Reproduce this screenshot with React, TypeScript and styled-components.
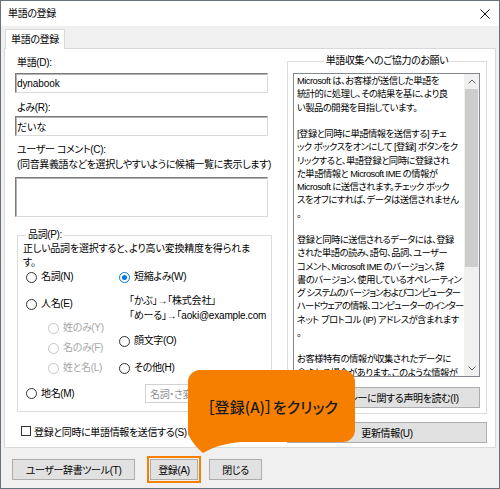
import React from "react";
import styled, { createGlobalStyle } from "styled-components";

const Global = createGlobalStyle`
  html, body { margin: 0; padding: 0; background: #ffffff; }
  body {
    font-family: "Liberation Sans", "Noto Sans CJK JP", sans-serif;
    font-size: 10px;
    color: #000;
    font-feature-settings: "palt";
    letter-spacing: -0.35px;
  }
  * { box-sizing: border-box; }
`;

const Window = styled.div`
  position: relative;
  width: 500px;
  height: 489px;
  border: 1px solid #66717c;
  background: #f0f0f0;
  display: flex;
  flex-direction: column;
  overflow: hidden;
`;

const TitleBar = styled.div`
  height: 25px;
  flex: none;
  background: #fff;
  display: flex;
  align-items: center;
  justify-content: space-between;
  padding: 0 9px 0 7px;
  line-height: 14px;
`;

const TabStrip = styled.div`
  height: 22px;
  flex: none;
  display: flex;
  align-items: flex-end;
  padding-left: 4px;
`;

const Tab = styled.div`
  position: relative;
  z-index: 1;
  height: 20px;
  margin-bottom: -1px;
  padding: 0 5px;
  background: #fff;
  border: 1px solid #d9d9d9;
  border-bottom: none;
  display: flex;
  align-items: center;
  line-height: 14px;
`;

const Panel = styled.div`
  width: 492px;
  height: 400px;
  flex: none;
  margin-left: 3px;
  background: #fff;
  border: 1px solid #d9d9d9;
  display: grid;
  grid-template-columns: 257px 200px;
  column-gap: 15px;
  align-content: start;
  padding: 5px 0 0 10px;
`;

const Column = styled.div`
  display: flex;
  flex-direction: column;
`;

const Label = styled.div<{ $mt?: number; $ml?: number }>`
  line-height: 14px;
  height: 14px;
  white-space: nowrap;
  margin-top: ${(p) => p.$mt ?? 0}px;
  margin-left: ${(p) => p.$ml ?? 2}px;
`;

const TextField = styled.input<{ $mt?: number }>`
  display: block;
  width: 253px;
  height: 20px;
  margin: ${(p) => p.$mt ?? 0}px 0 0 0;
  padding: 0 1px;
  font: inherit;
  font-feature-settings: "palt";
  letter-spacing: -0.1px;
  color: #000;
  background: #fff;
  border: 1px solid;
  border-color: #7a7a7a #dadada #dadada #7a7a7a;
  box-shadow: inset 1px 1px 0 #b4b4b4;
  outline: none;
`;

const TextArea = styled.textarea`
  display: block;
  width: 253px;
  height: 40px;
  margin-top: 5px;
  padding: 1px;
  resize: none;
  font: inherit;
  background: #fff;
  border: 1px solid;
  border-color: #7a7a7a #dadada #dadada #7a7a7a;
  box-shadow: inset 1px 1px 0 #b4b4b4;
  outline: none;
`;

const Group = styled.fieldset<{ $mt?: number; $ml?: number; $pad: string }>`
  margin: ${(p) => p.$mt ?? 0}px 0 0 ${(p) => p.$ml ?? 0}px;
  padding: ${(p) => p.$pad};
  border: 1px solid #dcdcdc;
  min-width: 0;
`;

const Legend = styled.legend<{ $center?: boolean }>`
  padding: 0 2px;
  margin: ${(p) => (p.$center ? "0 auto" : "0 0 0 3px")};
  line-height: 14px;
  height: 14px;
  white-space: nowrap;
`;

const Description = styled.div`
  line-height: 14px;
  white-space: nowrap;
  letter-spacing: -0.2px;
`;

const RadioGrid = styled.div`
  display: grid;
  grid-template-columns: 96px 1fr;
`;

const RadioCol = styled.div<{ $pl?: number }>`
  display: flex;
  flex-direction: column;
  padding-left: ${(p) => p.$pl ?? 0}px;
`;

const RadioRow = styled.div<{ $mt?: number; $indent?: number; $disabled?: boolean }>`
  display: flex;
  align-items: center;
  gap: 4px;
  height: 14px;
  line-height: 14px;
  white-space: nowrap;
  margin-top: ${(p) => p.$mt ?? 0}px;
  margin-left: ${(p) => p.$indent ?? 0}px;
  color: ${(p) => (p.$disabled ? "#a6a6a6" : "#000")};
`;

const RadioCircle = styled.span<{ $checked?: boolean; $disabled?: boolean }>`
  flex: none;
  width: 11px;
  height: 11px;
  border-radius: 50%;
  background: #fff;
  border: 1px solid
    ${(p) => (p.$disabled ? "#c6c6c6" : p.$checked ? "#0078d7" : "#333")};
  display: inline-flex;
  align-items: center;
  justify-content: center;
  &::after {
    content: "";
    width: 5px;
    height: 5px;
    border-radius: 50%;
    background: ${(p) => (p.$checked ? "#0078d7" : "transparent")};
  }
`;

const Example = styled.div<{ $mt?: number }>`
  height: 14px;
  line-height: 14px;
  white-space: nowrap;
  margin-left: 10px;
  margin-top: ${(p) => p.$mt ?? 0}px;
  letter-spacing: -0.2px;
`;

const BottomRow = styled.div`
  display: grid;
  grid-template-columns: 96px 1fr;
  align-items: center;
  margin-top: 9px;
  padding-left: 3px;
`;

const Combo = styled.div`
  width: 120px;
  height: 19px;
  margin-left: 23px;
  padding: 0 4px;
  display: flex;
  align-items: center;
  color: #8e8e8e;
  background: #fff;
  border: 1px solid #d2d2d2;
  white-space: nowrap;
`;

const CheckRow = styled.div`
  display: flex;
  align-items: center;
  gap: 3px;
  height: 14px;
  margin: 12px 0 0 6px;
  white-space: nowrap;
`;

const CheckBox = styled.span`
  flex: none;
  width: 10px;
  height: 10px;
  background: #fff;
  border: 1px solid #333;
`;

const InfoBox = styled.div`
  width: 187px;
  height: 304px;
  border: 1px solid #828790;
  background: #fff;
  display: flex;
`;

const InfoText = styled.div`
  flex: 1;
  overflow: hidden;
  padding: 1px 0 0 3px;
  font-size: 9.3px;
`;

const InfoLine = styled.div<{ $tight?: boolean }>`
  height: 13.25px;
  line-height: 13.25px;
  white-space: nowrap;
  letter-spacing: ${(p) => (p.$tight ? "-0.85px" : "-0.5px")};
`;

const ScrollBar = styled.div`
  width: 15px;
  flex: none;
  background: #f0f0f0;
  display: flex;
  flex-direction: column;
  align-items: center;
`;

const ScrollArrow = styled.div`
  width: 15px;
  height: 15px;
  flex: none;
  display: flex;
  align-items: center;
  justify-content: center;
`;

const ScrollThumb = styled.div`
  width: 13px;
  height: 178px;
  background: #cdcdcd;
`;

const ScrollSpace = styled.div`
  flex: 1;
`;

const Button = styled.button<{ $w: number; $mt?: number; $hl?: boolean }>`
  display: flex;
  align-items: center;
  justify-content: center;
  width: ${(p) => p.$w}px;
  height: 21px;
  flex: none;
  margin: ${(p) => p.$mt ?? 0}px 0 0 0;
  padding: 0;
  font: inherit;
  font-feature-settings: "palt";
  letter-spacing: inherit;
  color: #000;
  background: #e1e1e1;
  border: 1px solid #adadad;
  white-space: nowrap;
  outline: ${(p) => (p.$hl ? "2px solid #f47f00" : "none")};
  outline-offset: 1px;
`;

const ButtonBar = styled.div`
  flex: 1;
  display: flex;
  align-items: flex-start;
  padding: 11px 0 0 11px;
`;

const BarGap = styled.div<{ $w: number }>`
  width: ${(p) => p.$w}px;
  flex: none;
`;

const Callout = styled.div`
  position: absolute;
  left: 187px;
  top: 369px;
  width: 168px;
  height: 84px;
`;

const CalloutShape = styled.svg`
  position: absolute;
  left: 0;
  top: 0;
`;

const CalloutText = styled.div`
  position: relative;
  height: 72px;
  display: flex;
  align-items: center;
  justify-content: center;
  font-family: "Noto Sans CJK JP", sans-serif;
  font-size: 15px;
  font-weight: 500;
  color: #1b1b1b;
  letter-spacing: 0.1px;
  white-space: nowrap;
  padding-left: 1px;
`;

const infoLines: { text: string; tight?: boolean }[] = [
  { text: "Microsoft は、お客様が送信した単語を" },
  { text: "統計的に処理し、その結果を基に、より良" },
  { text: "い製品の開発を目指しています。" },
  { text: "" },
  { text: "[登録と同時に単語情報を送信する] チェ" },
  { text: "ック ボックスをオンにして [登録] ボタンをク" },
  { text: "リックすると、単語登録と同時に登録され" },
  { text: "た単語情報と Microsoft IME の情報が" },
  { text: "Microsoft に送信されます。チェック ボック" },
  { text: "スをオフにすれば、データは送信されません" },
  { text: "。" },
  { text: "" },
  { text: "登録と同時に送信されるデータには、登録" },
  { text: "された単語の読み、語句、品詞、ユーザー" },
  { text: "コメント、Microsoft IME のバージョン、辞" },
  { text: "書のバージョン、使用しているオペレーティン" },
  { text: "グ システムのバージョンおよびコンピューター", tight: true },
  { text: "ハードウェアの情報、コンピューターのインター", tight: true },
  { text: "ネット プロトコル (IP) アドレスが含まれます" },
  { text: "。" },
  { text: "" },
  { text: "お客様特有の情報が収集されたデータに" },
  { text: "含まれる場合があります。このような情報が" },
];

function Radio(props: {
  label: string;
  mt?: number;
  indent?: number;
  checked?: boolean;
  disabled?: boolean;
}) {
  return (
    <RadioRow $mt={props.mt} $indent={props.indent} $disabled={props.disabled}>
      <RadioCircle $checked={props.checked} $disabled={props.disabled} />
      <span>{props.label}</span>
    </RadioRow>
  );
}

export default function App() {
  return (
    <>
      <Global />
      <Window>
        <TitleBar>
          <span>単語の登録</span>
          <svg width="10" height="10" viewBox="0 0 10 10">
            <path d="M0.5 0.5 L9.5 9.5 M9.5 0.5 L0.5 9.5" stroke="#111" strokeWidth="1" />
          </svg>
        </TitleBar>
        <TabStrip>
          <Tab>単語の登録</Tab>
        </TabStrip>
        <Panel>
          <Column>
            <Label $mt={2}>単語(D):</Label>
            <TextField $mt={3} readOnly value="dynabook" />
            <Label $mt={8}>よみ(R):</Label>
            <TextField $mt={1} readOnly value="だいな" />
            <Label $mt={7}>ユーザー コメント(C):</Label>
            <Label $mt={1}>(同音異義語などを選択しやすいように候補一覧に表示します)</Label>
            <TextArea readOnly value="" />
            <Group $mt={11} $ml={2} $pad="0 4px 8px 5px">
              <Legend>品詞(P):</Legend>
              <Description>
                正しい品詞を選択すると、より高い変換精度を得られま
                <br />
                す。
              </Description>
              <RadioGrid>
                <RadioCol $pl={3}>
                  <Radio label="名詞(N)" />
                  <Radio label="人名(E)" mt={13} />
                  <Radio label="姓のみ(Y)" mt={10} indent={22} disabled />
                  <Radio label="名のみ(F)" mt={6} indent={22} disabled />
                  <Radio label="姓と名(L)" mt={6} indent={22} disabled />
                </RadioCol>
                <RadioCol>
                  <Radio label="短縮よみ(W)" checked />
                  <Example $mt={10}>「かぶ」→「株式会社」</Example>
                  <Example $mt={1}>「めーる」→「aoki@example.com</Example>
                  <Radio label="顔文字(O)" mt={11} />
                  <Radio label="その他(H)" mt={13} />
                </RadioCol>
              </RadioGrid>
              <BottomRow>
                <Radio label="地名(M)" />
                <Combo>名詞・さ変</Combo>
              </BottomRow>
            </Group>
            <CheckRow>
              <CheckBox />
              <span>登録と同時に単語情報を送信する(S)</span>
            </CheckRow>
          </Column>
          <Column>
            <Group $pad="5px 5px 5px 5px">
              <Legend $center>単語収集へのご協力のお願い</Legend>
              <InfoBox>
                <InfoText>
                  {infoLines.map((l, i) => (
                    <InfoLine key={i} $tight={l.tight}>
                      {l.text || "\u00a0"}
                    </InfoLine>
                  ))}
                </InfoText>
                <ScrollBar>
                  <ScrollArrow>
                    <svg width="8" height="5" viewBox="0 0 8 5">
                      <path d="M0.5 4.5 L4 1 L7.5 4.5" fill="none" stroke="#606060" strokeWidth="1" />
                    </svg>
                  </ScrollArrow>
                  <ScrollThumb />
                  <ScrollSpace />
                  <ScrollArrow>
                    <svg width="8" height="5" viewBox="0 0 8 5">
                      <path d="M0.5 0.5 L4 4 L7.5 0.5" fill="none" stroke="#606060" strokeWidth="1" />
                    </svg>
                  </ScrollArrow>
                </ScrollBar>
              </InfoBox>
              <Button $w={187} $mt={10}>プライバシーに関する声明を読む(I)</Button>
            </Group>
            <Button $w={200} $mt={8}>更新情報(U)</Button>
          </Column>
        </Panel>
        <ButtonBar>
          <Button $w={123}>ユーザー辞書ツール(T)</Button>
          <BarGap $w={15} />
          <Button $w={48} $hl>登録(A)</Button>
          <BarGap $w={11} />
          <Button $w={53}>閉じる</Button>
        </ButtonBar>
        <Callout>
          <CalloutShape width="168" height="84" viewBox="0 0 168 84">
            <path
              d="M12 0 H155 A12 12 0 0 1 167 12 V60 A12 12 0 0 1 155 72 H52 Q30 74 15 83 Q6 76 0 64 V12 A12 12 0 0 1 12 0 Z"
              fill="#f67f00"
            />
          </CalloutShape>
          <CalloutText>［登録(A)］をクリック</CalloutText>
        </Callout>
      </Window>
    </>
  );
}
